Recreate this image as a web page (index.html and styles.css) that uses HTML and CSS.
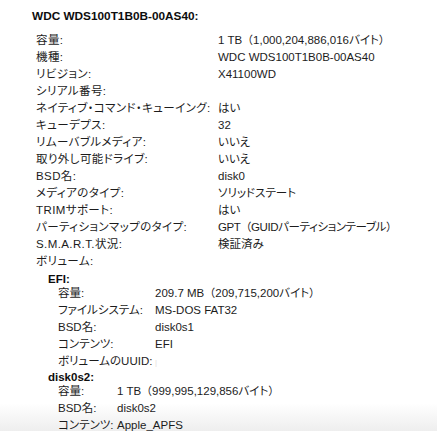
FILE: index.html
```html
<!DOCTYPE html>
<html lang="ja">
<head>
<meta charset="utf-8">
<link rel="stylesheet" href="styles.css">
</head>
<body>
<div class="fade"></div>
<div class="page">
  <h1 class="title">WDC WDS100T1B0B-00AS40:</h1>
  <dl class="props main">
    <dt>容量:</dt><dd>1 TB<span class="paren">（</span>1,000,204,886,016バイト<span class="paren">）</span></dd>
    <dt>機種:</dt><dd>WDC WDS100T1B0B-00AS40</dd>
    <dt>リビジョン:</dt><dd>X41100WD</dd>
    <dt>シリアル番号:</dt><dd></dd>
    <dt>ネイティブ・コマンド・キューイング:</dt><dd>はい</dd>
    <dt>キューデプス:</dt><dd>32</dd>
    <dt>リムーバブルメディア:</dt><dd>いいえ</dd>
    <dt>取り外し可能ドライブ:</dt><dd>いいえ</dd>
    <dt>BSD名:</dt><dd>disk0</dd>
    <dt>メディアのタイプ:</dt><dd>ソリッドステート</dd>
    <dt>TRIMサポート:</dt><dd>はい</dd>
    <dt>パーティションマップのタイプ:</dt><dd class="tight">GPT<span class="paren">（</span>GUIDパーティションテーブル<span class="paren">）</span></dd>
    <dt>S.M.A.R.T.状況:</dt><dd>検証済み</dd>
    <dt>ボリューム:</dt><dd></dd>
  </dl>
  <div class="volume">
    <h2 class="vol-title">EFI:</h2>
    <dl class="props efi">
      <dt>容量:</dt><dd>209.7 MB<span class="paren">（</span>209,715,200バイト<span class="paren">）</span></dd>
      <dt>ファイルシステム:</dt><dd>MS-DOS FAT32</dd>
      <dt>BSD名:</dt><dd>disk0s1</dd>
      <dt>コンテンツ:</dt><dd>EFI</dd>
      <dt>ボリュームのUUID:</dt><dd><span class="faint">|</span></dd>
    </dl>
  </div>
  <div class="volume second">
    <h2 class="vol-title">disk0s2:</h2>
    <dl class="props apfs">
      <dt>容量:</dt><dd>1 TB<span class="paren">（</span>999,995,129,856バイト<span class="paren">）</span></dd>
      <dt>BSD名:</dt><dd>disk0s2</dd>
      <dt>コンテンツ:</dt><dd>Apple_APFS</dd>
    </dl>
  </div>
</div>
</body>
</html>
```
FILE: styles.css
```css
html, body {
  margin: 0;
  padding: 0;
  background: #ffffff;
}
body {
  width: 437px;
  height: 431px;
  overflow: hidden;
  position: relative;
  font-family: "Liberation Sans", "Noto Sans CJK JP", sans-serif;
  font-size: 11.5px;
  font-feature-settings: "palt";
  color: #1c1c1c;
}
.page {
  position: relative;
  z-index: 1;
  padding: 9px 0 0 32px;
}
.title {
  margin: 0;
  font-size: 11.8px;
  font-weight: bold;
  line-height: 14px;
  color: #0d0d0d;
}
.props {
  margin: 0;
  display: grid;
  line-height: 17px;
}
.props dt, .props dd {
  margin: 0;
  white-space: nowrap;
}
.main dt {
  letter-spacing: 0.4px;
}
.props dd.tight {
  letter-spacing: -0.4px;
}
.paren {
  font-feature-settings: normal;
  font-size: 11px;
}
.main {
  margin-top: 8.5px;
  padding-left: 4px;
  grid-template-columns: 182px 1fr;
}
.volume {
  padding-left: 16px;
}
.vol-title {
  margin: 3px 0 0 0;
  font-size: 11.5px;
  font-weight: bold;
  line-height: 12px;
  color: #0d0d0d;
}
.second .vol-title {
  margin-top: 0;
}
.props.efi, .props.apfs {
  padding-left: 10px;
}
.efi {
  grid-template-columns: 97px 1fr;
}
.apfs {
  grid-template-columns: 59px 1fr;
}
.faint {
  color: #e6dedb;
  font-size: 8px;
}
.fade {
  position: absolute;
  left: 0;
  right: 0;
  bottom: 0;
  height: 28px;
  background: linear-gradient(to bottom, rgba(244,244,244,0), rgba(238,238,238,1));
  z-index: 0;
}
```
